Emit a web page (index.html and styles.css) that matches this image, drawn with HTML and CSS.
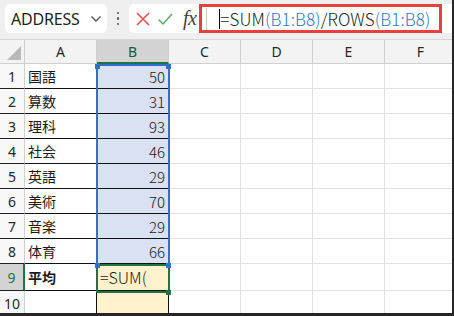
FILE: index.html
```html
<!DOCTYPE html>
<html lang="ja">
<head>
<meta charset="utf-8">
<link rel="stylesheet" href="styles.css">
</head>
<body>
<div class="app">
  <div class="toolbar">
    <div class="namebox">
      <span class="name">ADDRESS</span>
      <svg class="chev" width="12" height="8" viewBox="0 0 12 8"><path d="M1.5 1.5 L6 6 L10.5 1.5" fill="none" stroke="#555" stroke-width="1.4"/></svg>
    </div>
    <div class="dots"><i></i><i></i><i></i></div>
    <div class="fbar">
      <svg class="ico" width="16" height="16" viewBox="0 0 16 16"><path d="M2 2 L14 14 M14 2 L2 14" stroke="#e5484d" stroke-width="1.5" fill="none"/></svg>
      <svg class="ico" width="16" height="16" viewBox="0 0 16 16"><path d="M1.5 8.5 L6 13 L15 3" stroke="#5aaa62" stroke-width="1.5" fill="none"/></svg>
      <span class="fx">fx</span>
      <div class="finput">
        <span class="sep"></span>
        <span class="caret"></span>
        <span class="formula">=SUM<span class="ref">(B1:B8)</span>/ROWS<span class="ref">(B1:B8)</span></span>
      </div>
    </div>
  </div>
  <div class="sheet">
    <div class="grid">
      <div class="corner"><span class="tri"></span></div>
      <div class="ch">A</div><div class="ch on">B</div><div class="ch">C</div><div class="ch">D</div><div class="ch">E</div><div class="ch">F</div>

      <div class="rh tb">1</div><div class="c t jp">国語</div><div class="c t sel num">50</div><div class="c"></div><div class="c"></div><div class="c"></div><div class="c"></div>
      <div class="rh tb">2</div><div class="c t jp">算数</div><div class="c t sel num">31</div><div class="c"></div><div class="c"></div><div class="c"></div><div class="c"></div>
      <div class="rh tb">3</div><div class="c t jp">理科</div><div class="c t sel num">93</div><div class="c"></div><div class="c"></div><div class="c"></div><div class="c"></div>
      <div class="rh tb">4</div><div class="c t jp">社会</div><div class="c t sel num">46</div><div class="c"></div><div class="c"></div><div class="c"></div><div class="c"></div>
      <div class="rh tb">5</div><div class="c t jp">英語</div><div class="c t sel num">29</div><div class="c"></div><div class="c"></div><div class="c"></div><div class="c"></div>
      <div class="rh tb">6</div><div class="c t jp">美術</div><div class="c t sel num">70</div><div class="c"></div><div class="c"></div><div class="c"></div><div class="c"></div>
      <div class="rh tb">7</div><div class="c t jp">音楽</div><div class="c t sel num">29</div><div class="c"></div><div class="c"></div><div class="c"></div><div class="c"></div>
      <div class="rh tb">8</div><div class="c t jp">体育</div><div class="c t sel num">66</div><div class="c"></div><div class="c"></div><div class="c"></div><div class="c"></div>
      <div class="rh tb on">9</div><div class="c t jp bold">平均</div><div class="c t act edit">=SUM(</div><div class="c"></div><div class="c"></div><div class="c"></div><div class="c"></div>
      <div class="rh">10</div><div class="c tr"></div><div class="c tr act"></div><div class="c"></div><div class="c"></div><div class="c"></div><div class="c"></div>
    </div>
    <div class="range"></div>
    <div class="active"></div>
    <span class="h h1"></span><span class="h h2"></span><span class="h h3"></span><span class="h h4"></span>
    <span class="h g"></span>
  </div>
</div>
</body>
</html>
```

FILE: styles.css
```css
* { box-sizing: border-box; }
html, body { margin: 0; padding: 0; }
body { width: 454px; height: 316px; overflow: hidden; background: #fff; font-family: "Noto Sans", "Noto Sans CJK JP", sans-serif; }

.app {
  width: 454px; height: 316px; overflow: hidden;
  border-right: 2px solid #262626; border-bottom: 3px solid #262626;
  display: flex; flex-direction: column;
}

.toolbar {
  height: 40px; flex: none; background: #efefef;
  display: flex; align-items: flex-start; padding: 4px 0 0 5px;
  border-bottom: 1px solid #d6d6d6;
}
.namebox {
  width: 102px; height: 29px; background: #fff; border-radius: 5px;
  display: flex; align-items: center; justify-content: space-between;
  padding: 0 5px 0 6px;
}
.name { font-size: 16px; color: #1e1e1e; font-weight: 400; letter-spacing: -0.2px; }
.chev { margin-top: 1px; }
.dots { width: 22px; height: 29px; display: flex; flex-direction: column; align-items: center; justify-content: center; gap: 3px; }
.dots i { width: 2.5px; height: 2.5px; background: #555; border-radius: 50%; }
.fbar {
  flex: 1; height: 29px; background: #fff; border-radius: 5px 0 0 5px;
  display: flex; align-items: center; padding-left: 6px;
}
.ico { margin-right: 6px; flex: none; }
.fx { font-family: "Liberation Serif", serif; font-style: italic; font-size: 20px; color: #444; width: 18px; margin-left: 4px; letter-spacing: -0.5px; line-height: 1; margin-top: -2px; }
.finput {
  margin-left: -2px; width: 243px; height: 29px; border: 3px solid #e8403f;
  display: flex; align-items: center; padding-left: 4px;
}
.sep { width: 1px; height: 22px; background: #cfcfcf; flex: none; }
.caret { width: 1.3px; height: 20px; background: #000; margin-left: 12px; flex: none; }
.formula { font-size: 17px; color: #262626; white-space: nowrap; letter-spacing: 0.1px; font-family: "Noto Sans CJK JP", sans-serif; font-weight: 300; line-height: 1; }
.ref { color: #2f78c4; }

.sheet { position: relative; flex: 1; overflow: hidden; }
.grid {
  display: grid;
  grid-template-columns: 25px repeat(6, 72px);
  grid-template-rows: 24px repeat(8, 25px) 27px 25px;
  width: 457px;
}
.grid > div {
  border-right: 1px solid #e1e1e1; border-bottom: 1px solid #e1e1e1;
  display: flex; align-items: center; white-space: nowrap; overflow: hidden;
}
.corner { background: #f3f3f3; border-color: #cfcfcf !important; position: relative; }
.tri { position: absolute; right: 3px; bottom: 3px; width: 0; height: 0; border-left: 14px solid transparent; border-bottom: 14px solid #b9b9b9; }
.ch {
  background: #f3f3f3; justify-content: center; font-size: 14px; color: #262626;
  border-right-color: #cfcfcf !important; border-bottom-color: #cfcfcf !important;
}
.ch.on { background: #d3d3d3; color: #185c37; border-bottom: 2px solid #217346 !important; }
.rh {
  background: #f8f8f8; justify-content: center; font-size: 14px; color: #262626;
  border-right-color: #cfcfcf !important; border-bottom-color: #cfcfcf !important;
}
.rh.tb { border-bottom-color: #222 !important; }
.rh.on { background: #d3d3d3; color: #217346; border-right: 2px solid #217346 !important; }

.c { font-size: 15px; color: #1a1a1a; }
.t { border-right-color: #111 !important; border-bottom-color: #111 !important; }
.tr { border-right-color: #111 !important; }
.jp { font-family: "Noto Sans CJK JP", sans-serif; font-size: 14px; padding-left: 3px; }
.bold { font-weight: 700; }
.num { justify-content: flex-end; padding-right: 3px; font-family: "Noto Sans CJK JP", sans-serif; font-weight: 300; }
.sel { background: #d9e1f2; }
.act { background: #fff2cc; }
.edit { font-family: "Noto Sans CJK JP", sans-serif; font-size: 16px; padding-left: 3px; font-weight: 300; }

.range { position: absolute; left: 96px; top: 24px; width: 74px; height: 202px; border: 2px solid #2e6fcf; pointer-events: none; }
.active { position: absolute; left: 96px; top: 224px; width: 74px; height: 29px; border: 2px solid #217346; pointer-events: none; }
.h { position: absolute; width: 5px; height: 5px; background: #2e6fcf; }
.h1 { left: 95px; top: 24px; }
.h2 { left: 166px; top: 24px; }
.h3 { left: 95px; top: 223px; }
.h4 { left: 166px; top: 223px; }
.g { background: #217346; left: 166px; top: 250px; width: 5px; height: 5px; }
```
